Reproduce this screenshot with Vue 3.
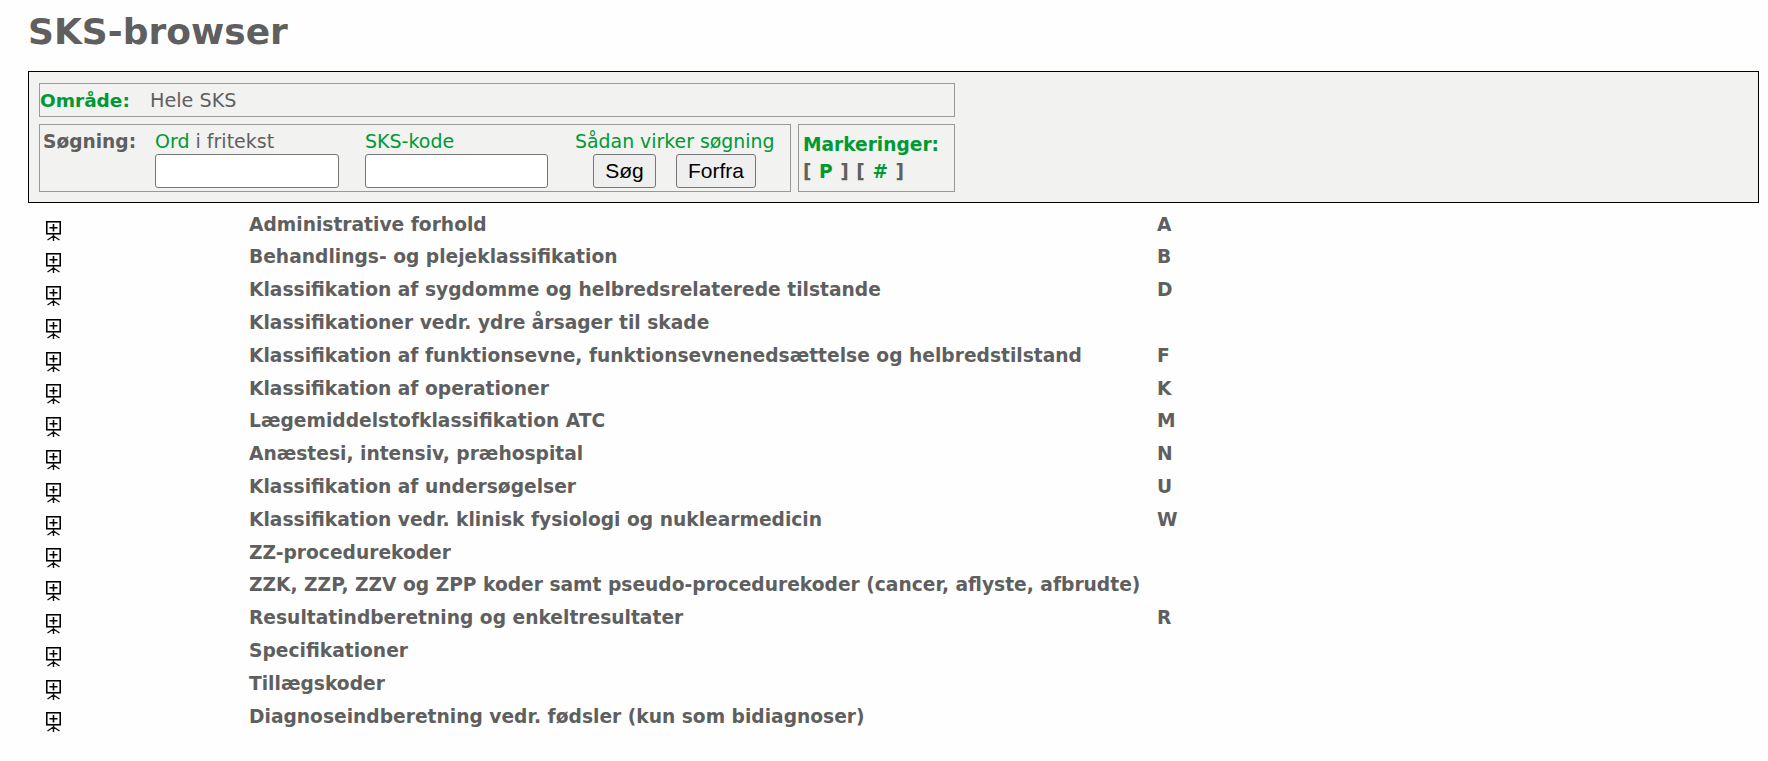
<template>
  <div class="page">
    <h1 class="title">SKS-browser</h1>

    <div class="panel">
      <div class="area">
        <span class="area-label">Område:</span>
        <span class="area-value">Hele SKS</span>
      </div>

      <div class="lower">
        <div class="search">
          <span class="search-label">Søgning:</span>
          <div class="field first">
            <span class="field-label"><span class="green">Ord</span> i fritekst</span>
            <input class="field-input" type="text" />
          </div>
          <div class="field second">
            <span class="field-label green">SKS-kode</span>
            <input class="field-input" type="text" />
          </div>
          <div class="actions">
            <span class="field-label green">Sådan virker søgning</span>
            <div class="buttons">
              <button class="btn seek">Søg</button>
              <button class="btn reset">Forfra</button>
            </div>
          </div>
        </div>

        <div class="marks">
          <div class="marks-title">Markeringer:</div>
          <div class="marks-links">[ <span class="green">P</span> ] [ <span class="green">#</span> ]</div>
        </div>
      </div>
    </div>

    <div class="tree">
      <div v-for="row in rows" :key="row.name" class="row">
        <span class="icon-cell">
          <svg class="tree-icon" width="15" height="20" viewBox="0 0 15 20">
            <rect x="0.75" y="0.75" width="13.5" height="12" fill="#fff" stroke="#000" stroke-width="1.6" />
            <path d="M7.5 3v7.5M3.5 6.75h8" stroke="#000" stroke-width="1.6" fill="none" />
            <path d="M7.5 13v7M7.5 15l-6 4M7.5 15l6 4" stroke="#111" stroke-width="1.4" fill="none" />
          </svg>
        </span>
        <span class="name">{{ row.name }}</span>
        <span class="code">{{ row.code }}</span>
      </div>
    </div>
  </div>
</template>

<script setup>
const rows = [
  { name: 'Administrative forhold', code: 'A' },
  { name: 'Behandlings- og plejeklassifikation', code: 'B' },
  { name: 'Klassifikation af sygdomme og helbredsrelaterede tilstande', code: 'D' },
  { name: 'Klassifikationer vedr. ydre årsager til skade', code: '' },
  { name: 'Klassifikation af funktionsevne, funktionsevnenedsættelse og helbredstilstand', code: 'F' },
  { name: 'Klassifikation af operationer', code: 'K' },
  { name: 'Lægemiddelstofklassifikation ATC', code: 'M' },
  { name: 'Anæstesi, intensiv, præhospital', code: 'N' },
  { name: 'Klassifikation af undersøgelser', code: 'U' },
  { name: 'Klassifikation vedr. klinisk fysiologi og nuklearmedicin', code: 'W' },
  { name: 'ZZ-procedurekoder', code: '' },
  { name: 'ZZK, ZZP, ZZV og ZPP koder samt pseudo-procedurekoder (cancer, aflyste, afbrudte)', code: '' },
  { name: 'Resultatindberetning og enkeltresultater', code: 'R' },
  { name: 'Specifikationer', code: '' },
  { name: 'Tillægskoder', code: '' },
  { name: 'Diagnoseindberetning vedr. fødsler (kun som bidiagnoser)', code: '' }
]
</script>

<style scoped>
.page {
  padding: 0 9px 0 28px;
  font-family: "DejaVu Sans", Verdana, sans-serif;
  color: #5f5f5f;
}

.title {
  margin: 0;
  padding-top: 10px;
  height: 71px;
  box-sizing: border-box;
  font-size: 36px;
  line-height: 44px;
  font-weight: bold;
  color: #5f5f5f;
}

.panel {
  box-sizing: border-box;
  height: 132px;
  border: 1px solid #000;
  background: #f2f2f1;
  padding: 11px 0 0 10px;
}

.green {
  color: #009933;
}

.area {
  box-sizing: border-box;
  width: 916px;
  height: 34px;
  border: 1px solid #999;
  display: flex;
  align-items: center;
  font-size: 19.2px;
}

.area-label {
  width: 110px;
  font-size: 18.5px;
  font-weight: bold;
  color: #009933;
}

.lower {
  display: flex;
  gap: 7px;
  margin-top: 7px;
}

.search {
  box-sizing: border-box;
  width: 752px;
  height: 68px;
  border: 1px solid #999;
  display: flex;
  padding: 5px 0 0 3px;
  font-size: 19px;
}

.search-label {
  width: 112px;
  font-size: 18.6px;
  font-weight: bold;
  line-height: 22px;
  padding-top: 1px;
}

.field {
  display: flex;
  flex-direction: column;
}

.first,
.second {
  width: 210px;
}

.field-label {
  line-height: 22px;
  height: 24px;
  white-space: nowrap;
}

.field-input {
  box-sizing: border-box;
  width: 184px;
  height: 34px;
  border: 1px solid #767676;
  border-radius: 3px;
  background: #fff;
  padding: 0;
}

.second .field-input {
  width: 183px;
}

.actions {
  display: flex;
  flex-direction: column;
}

.actions .field-label {
  font-size: 18.9px;
}

.buttons {
  display: flex;
  gap: 20px;
  margin-left: 18px;
}

.btn {
  box-sizing: border-box;
  height: 34px;
  border: 1px solid #767676;
  border-radius: 3px;
  background: #efefef;
  color: #000;
  font-family: "Liberation Sans", Arial, sans-serif;
  font-size: 21px;
  padding: 0;
}

.seek {
  width: 63px;
}

.reset {
  width: 80px;
}

.marks {
  box-sizing: border-box;
  width: 157px;
  height: 68px;
  border: 1px solid #999;
  padding: 9px 0 0 4px;
  font-size: 18.6px;
  font-weight: bold;
}

.marks-title {
  color: #009933;
  line-height: 22px;
}

.marks-links {
  line-height: 24px;
  margin-top: 4px;
  white-space: pre;
  word-spacing: 1.1px;
}

.tree {
  padding-top: 4px;
}

.row {
  display: flex;
  height: 32.8px;
  align-items: flex-start;
  font-size: 18.67px;
  font-weight: bold;
}

.icon-cell {
  width: 221px;
  padding-left: 18px;
  padding-top: 13.5px;
  box-sizing: border-box;
  flex: none;
}

.tree-icon {
  display: block;
}

.name {
  width: 908px;
  flex: none;
  line-height: 24px;
  padding-top: 5.7px;
  white-space: nowrap;
}

.code {
  line-height: 24px;
  padding-top: 5.7px;
}
</style>

<style>
html,
body {
  background: #fefefe;
}
</style>
